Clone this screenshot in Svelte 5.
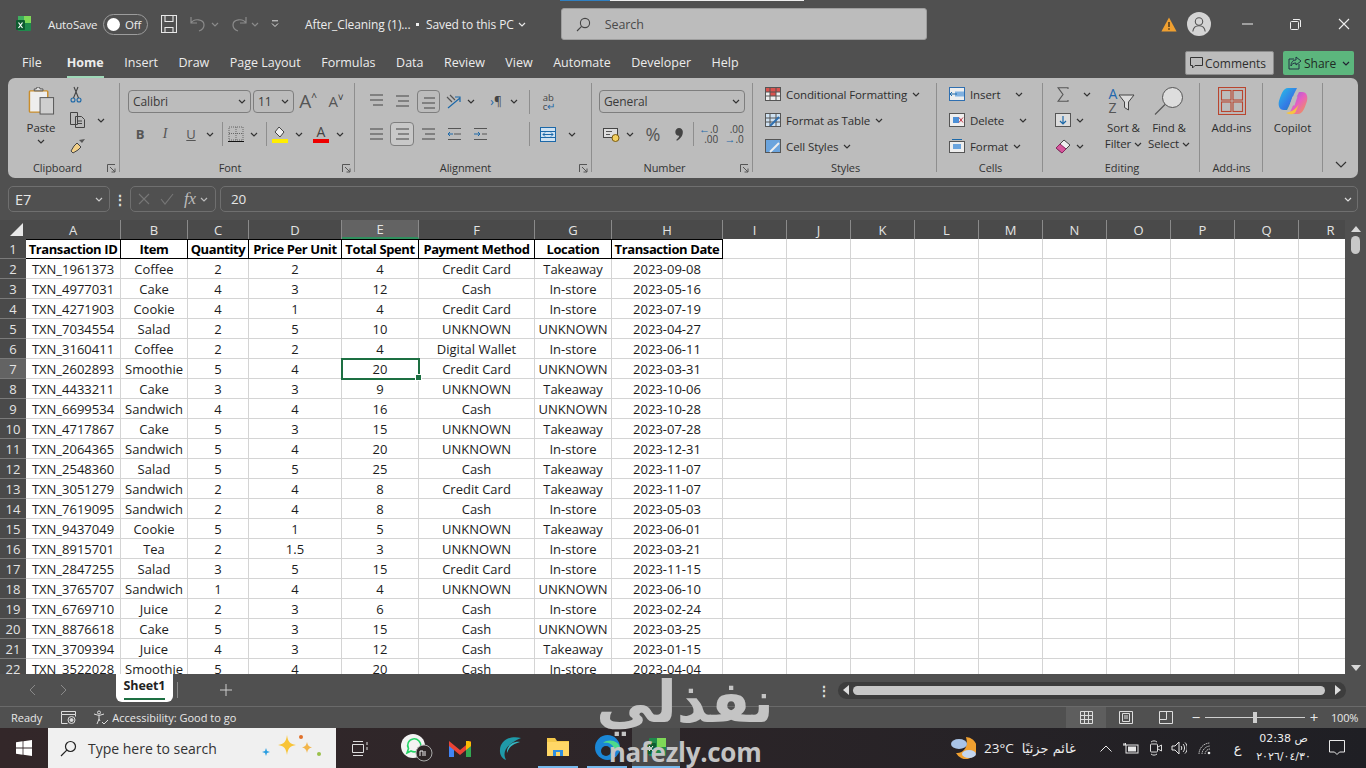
<script>
  const columns = ['A','B','C','D','E','F','G','H','I','J','K','L','M','N','O','P','Q','R'];
  const headers = ['Transaction ID','Item','Quantity','Price Per Unit','Total Spent','Payment Method','Location','Transaction Date'];
  const rows = [
    ['TXN_1961373','Coffee','2','2','4','Credit Card','Takeaway','2023-09-08'],
    ['TXN_4977031','Cake','4','3','12','Cash','In-store','2023-05-16'],
    ['TXN_4271903','Cookie','4','1','4','Credit Card','In-store','2023-07-19'],
    ['TXN_7034554','Salad','2','5','10','UNKNOWN','UNKNOWN','2023-04-27'],
    ['TXN_3160411','Coffee','2','2','4','Digital Wallet','In-store','2023-06-11'],
    ['TXN_2602893','Smoothie','5','4','20','Credit Card','UNKNOWN','2023-03-31'],
    ['TXN_4433211','Cake','3','3','9','UNKNOWN','Takeaway','2023-10-06'],
    ['TXN_6699534','Sandwich','4','4','16','Cash','UNKNOWN','2023-10-28'],
    ['TXN_4717867','Cake','5','3','15','UNKNOWN','Takeaway','2023-07-28'],
    ['TXN_2064365','Sandwich','5','4','20','UNKNOWN','In-store','2023-12-31'],
    ['TXN_2548360','Salad','5','5','25','Cash','Takeaway','2023-11-07'],
    ['TXN_3051279','Sandwich','2','4','8','Credit Card','Takeaway','2023-11-07'],
    ['TXN_7619095','Sandwich','2','4','8','Cash','In-store','2023-05-03'],
    ['TXN_9437049','Cookie','5','1','5','UNKNOWN','Takeaway','2023-06-01'],
    ['TXN_8915701','Tea','2','1.5','3','UNKNOWN','In-store','2023-03-21'],
    ['TXN_2847255','Salad','3','5','15','Credit Card','In-store','2023-11-15'],
    ['TXN_3765707','Sandwich','1','4','4','UNKNOWN','UNKNOWN','2023-06-10'],
    ['TXN_6769710','Juice','2','3','6','Cash','In-store','2023-02-24'],
    ['TXN_8876618','Cake','5','3','15','Cash','UNKNOWN','2023-03-25'],
    ['TXN_3709394','Juice','4','3','12','Cash','Takeaway','2023-01-15'],
    ['TXN_3522028','Smoothie','5','4','20','Cash','In-store','2023-04-04']
  ];
  const tabs = ['File','Home','Insert','Draw','Page Layout','Formulas','Data','Review','View','Automate','Developer','Help'];
</script>

{#snippet chev(color = '#333')}
  <svg class="chev" width="8" height="5" viewBox="0 0 8 5"><path d="M1 1l3 3 3-3" fill="none" stroke={color} stroke-width="1.2"/></svg>
{/snippet}

{#snippet lines(a, b, c, y = 3)}
  <svg width="15" height="16" viewBox="0 0 15 16" fill="none" stroke="#444" stroke-width="1.1">
    <path d="M{a} {y}H14M{b} {y + 5}H14M{c} {y + 10}H14" />
  </svg>
{/snippet}

{#snippet launcher()}
  <svg class="launch" width="9" height="9" viewBox="0 0 9 9" fill="none" stroke="#555"><path d="M.5 8V.5H8M3 3l5 5M8 4.5V8H4.5"/></svg>
{/snippet}

<div class="app">
  <div class="strip"><span class="strip-blue"></span><span class="strip-white"></span></div>

  <header class="titlebar">
    <svg class="logo" width="16" height="18" viewBox="0 0 16 18">
      <rect x="2" y="1" width="13" height="15" rx="1" fill="#1f8a4c"/>
      <rect x="8" y="1" width="7" height="7" fill="#7ed957"/>
      <rect x="2" y="1" width="6" height="7" fill="#3fae5f"/>
      <rect x="0" y="5" width="9" height="10" rx="1" fill="#0e5c30"/>
      <path d="M2.5 7.5l4 5.5M6.5 7.5l-4 5.5" stroke="#fff" stroke-width="1.2"/>
    </svg>
    <span class="autosave">AutoSave</span>
    <span class="toggle"><span class="knob"></span>Off</span>
    <svg class="save" width="16" height="18" viewBox="0 0 16 18" fill="none" stroke="#e8e8e8" stroke-width="1.1"><path d="M.5.5h15v17H.5zM4 .5v6h8v-6M4 17.5v-5h8v5"/></svg>
    <svg class="undo" width="16" height="16" viewBox="0 0 16 16" fill="none" stroke="#8b8b8b" stroke-width="1.2"><path d="M1 1v6h6M1 7c3-5 13-4 13 2 0 3-2 5-5 6"/></svg>
    <span class="q1">{@render chev('#8b8b8b')}</span>
    <svg class="redo" width="16" height="16" viewBox="0 0 16 16" fill="none" stroke="#8b8b8b" stroke-width="1.2"><path d="M15 1v6H9M15 7C12 2 2 3 2 9c0 3 2 5 5 6"/></svg>
    <span class="q2">{@render chev('#8b8b8b')}</span>
    <svg class="custom" width="8" height="8" viewBox="0 0 8 8" fill="none" stroke="#ddd"><path d="M1 .8h6M1 3.5l3 3 3-3"/></svg>
    <span class="doc first">After_Cleaning (1)...</span>
    <span class="dot"></span>
    <span class="doc">Saved to this PC</span>
    <span class="q3">{@render chev('#e8e8e8')}</span>
    <div class="search">
      <svg width="15" height="15" viewBox="0 0 15 15" fill="none" stroke="#444" stroke-width="1.1"><circle cx="9" cy="6" r="4.6"/><path d="M5.6 9.4L1 14"/></svg>
      <span>Search</span>
    </div>
    <svg class="warn" width="16" height="15" viewBox="0 0 16 15"><path d="M8 .5L15.6 14.5H.4z" fill="#f0a030"/><path d="M8 5v5M8 11.2v1.6" stroke="#40301a" stroke-width="1.4"/></svg>
    <span class="avatar">
      <svg width="14" height="15" viewBox="0 0 14 15" fill="none" stroke="#555" stroke-width="1.1"><circle cx="7" cy="4.5" r="3.7"/><path d="M.8 14.5c.5-4 3-5.8 6.2-5.8s5.700 1.800 6.200 5.800"/></svg>
    </span>
    <span class="winbtn first"><svg width="11" height="2" viewBox="0 0 11 2"><path d="M0 1h11" stroke="#eee"/></svg></span>
    <span class="winbtn"><svg width="11" height="11" viewBox="0 0 11 11" fill="none" stroke="#eee"><rect x=".5" y="2.500" width="8" height="8" rx="1"/><path d="M3 .5h6a1.500 1.500 0 0 1 1.500 1.500v6"/></svg></span>
    <span class="winbtn"><svg width="12" height="12" viewBox="0 0 12 12" stroke="#eee" stroke-width="1.100"><path d="M1 1l10 10M11 1L1 11"/></svg></span>
  </header>

  <nav class="tabsbar">
    <div class="tabs">
      {#each tabs as t}
        <span class="tab" class:active={t === 'Home'}>{t}</span>
      {/each}
    </div>
    <button class="comments">
      <svg width="13" height="12" viewBox="0 0 13 12" fill="none" stroke="#333"><path d="M.5.5h12v8H5L2.500 11V8.500h-2z"/></svg>Comments
    </button>
    <button class="share">
      <svg width="14" height="14" viewBox="0 0 14 14" fill="none" stroke="#234" stroke-width="1"><path d="M6 3H1v10h10V8M8 1l5 4-5 4V7C5 7 4 8 3 10c0-4 2-6 5-6z"/></svg>Share {@render chev('#223')}
    </button>
  </nav>

  <section class="ribbon">
    <div class="group g-clip">
      <div class="clip-body">
        <div class="paste">
          <svg width="27" height="28" viewBox="0 0 27 29">
            <rect x="1" y="4" width="19" height="22" rx="1" fill="#eee" stroke="#c98d2b" stroke-width="1.500"/>
            <path d="M6 4h9V2H12a2 2 0 0 0-4 0H6z" fill="#ddd" stroke="#555"/>
            <rect x="12" y="11" width="14" height="17" fill="#cfcfcf" stroke="#555"/>
          </svg>
          <span>Paste</span>
          {@render chev()}
        </div>
        <div class="clip-tools">
          <div class="clip-row">
            <svg width="12" height="17" viewBox="0 0 12 17" fill="none" stroke="#1c68a8" stroke-width="1.100"><circle cx="3" cy="14" r="2"/><circle cx="9" cy="14" r="2"/><path d="M3.500 12L8 1M8.500 12L4 1" stroke="#444"/></svg>
          </div>
          <div class="clip-row">
            <svg width="16" height="16" viewBox="0 0 16 16" fill="none" stroke="#444"><path d="M.5.5h7v12h-7zM5.500 4.500h6l3 3v8h-9z" fill="#bbb"/><path d="M8 9h4M8 11.500h4"/></svg>
            <span class="clip-chev">{@render chev()}</span>
          </div>
          <div class="clip-row">
            <svg width="16" height="16" viewBox="0 0 16 16"><path d="M9 2l3 3 3-4z" fill="#555"/><path d="M7 5l4 4-3 3-5 3-2-2 3-5z" fill="#f2d089" stroke="#444"/></svg>
          </div>
        </div>
      </div>
      <div class="glabel pr12"><span>Clipboard</span>{@render launcher()}</div>
    </div>

    <div class="group g-font">
      <div class="rows">
        <div class="row font1">
          <div class="select">Calibri {@render chev()}</div>
          <div class="select size">11 {@render chev()}</div>
          <span class="glyph big">A<sup>^</sup></span>
          <span class="glyph mid">A<sup>˅</sup></span>
        </div>
        <div class="row font2">
          <b class="glyph">B</b>
          <i class="glyph ital">I</i>
          <u class="glyph">U</u>
          {@render chev()}
          <span class="vsep"></span>
          <svg width="16" height="16" viewBox="0 0 16 16" fill="none" stroke="#666" stroke-dasharray="1 1"><rect x="1" y="1" width="14" height="13"/><path d="M8 1v13M1 7.500h14"/><path d="M0 15.500h16" stroke="#111" stroke-dasharray="none"/></svg>
          {@render chev()}
          <span class="vsep"></span>
          <svg width="16" height="17" viewBox="0 0 16 17"><path d="M7 1l5 5-4 5-5-5z" fill="#eee" stroke="#444"/><rect x="0" y="13" width="16" height="4" fill="#ffee00"/></svg>
          {@render chev()}
          <span class="fontcolor">A</span>
          {@render chev()}
        </div>
      </div>
      <div class="glabel"><span>Font</span>{@render launcher()}</div>
    </div>

    <div class="group g-align">
      <div class="rows">
        <div class="row align1">
          {@render lines(1, 1, 4, 1)}
          {@render lines(1, 3, 1, 2)}
          <span class="boxed">{@render lines(3, 1, 3, 4)}</span>
          <svg width="16" height="15" viewBox="0 0 16 15" fill="none" stroke="#1c68a8" stroke-width="1.200"><path d="M2 14L14 4M9 3h5v5"/><path d="M1 3l5 5M4 1l5 5" stroke="#555"/></svg>
          {@render chev()}
          <i></i>
          <span class="rtl"><em>›</em>¶</span>
          {@render chev()}
          <span class="vsep"></span>
          <span class="wrap">ab<br>c<em>↵</em></span>
        </div>
        <div class="row align2">
          {@render lines(1, 1, 1)}
          <span class="boxed on">{@render lines(1, 3, 1)}</span>
          {@render lines(1, 4, 1)}
          <svg width="15" height="14" viewBox="0 0 15 14" fill="none" stroke="#555"><path d="M1 1.500h13M7 7h7M1 12.500h13"/><path d="M6 7H1M3 5L1 7l2 2" stroke="#1c68a8"/></svg>
          <svg width="15" height="14" viewBox="0 0 15 14" fill="none" stroke="#555"><path d="M1 1.500h13M9 7h5M1 12.500h13"/><path d="M1 7h6M5 5l2 2-2 2" stroke="#1c68a8"/></svg>
          <i></i>
          <span class="vsep"></span>
          <svg width="16" height="15" viewBox="0 0 16 15" fill="#cfe2f2" stroke="#1c68a8"><rect x=".5" y=".5" width="15" height="14"/><path d="M.5 4.500h15M.5 10.500h15" /><path d="M3 7.500h10M5 5.500l-2 2 2 2M11 5.500l2 2-2 2" fill="none"/></svg>
          {@render chev()}
        </div>
      </div>
      <div class="glabel"><span>Alignment</span>{@render launcher()}</div>
    </div>

    <div class="group g-num">
      <div class="rows">
        <div class="row num1"><div class="select general">General {@render chev()}</div></div>
        <div class="row num2">
          <svg width="17" height="15" viewBox="0 0 17 15"><rect x=".5" y="1.500" width="14" height="9" fill="#ddd" stroke="#444"/><path d="M3 4.500h6M3 7.500h4" stroke="#555"/><ellipse cx="12.500" cy="11" rx="3.500" ry="3.500" fill="#f3d060" stroke="#7a5a10"/></svg>
          {@render chev()}
          <span class="pct">%</span>
          <svg width="8" height="13" viewBox="0 0 8 13"><path d="M4 0a3.800 3.800 0 0 1 3.800 4.200C7.800 8 5 11 2 12.800L1.200 12C3 10.500 4 9 4.300 7.800 2 8 .3 6.300.3 4 .3 1.700 2 0 4 0z" fill="#444"/></svg>
          <span class="vsep"></span>
          <span class="dec"><em>←</em>.0<br>.00</span>
          <span class="dec">.00<br><em>→</em>.0</span>
        </div>
      </div>
      <div class="glabel"><span>Number</span>{@render launcher()}</div>
    </div>

    <div class="group g-styles">
      <div class="stack">
        <div class="line">
          <svg width="16" height="14" viewBox="0 0 16 14"><rect x=".5" y=".5" width="15" height="13" fill="#eee" stroke="#555"/><rect x="1" y="1" width="14" height="4" fill="#d9534f"/><rect x="5" y="5" width="6" height="4" fill="#d9534f"/><path d="M.5 5h15M.5 9h15M5 .5v13M11 .5v13" stroke="#555"/></svg>
          <span>Conditional Formatting</span>{@render chev()}
        </div>
        <div class="line">
          <svg width="16" height="14" viewBox="0 0 16 14"><rect x=".5" y=".5" width="15" height="13" fill="#cfe2f2" stroke="#555"/><path d="M.5 5h15M.5 9h15M5 .5v13M11 .5v13" stroke="#555"/><path d="M5 13l9-9" stroke="#2f6fb0" stroke-width="2"/></svg>
          <span>Format as Table</span>{@render chev()}
        </div>
        <div class="line">
          <svg width="16" height="14" viewBox="0 0 16 14"><rect x=".5" y=".5" width="15" height="13" fill="#6ba4dd" stroke="#555"/><path d="M5 13l9-9" stroke="#eee" stroke-width="2"/></svg>
          <span>Cell Styles</span>{@render chev()}
        </div>
      </div>
      <div class="glabel pr10"><span>Styles</span></div>
    </div>

    <div class="group g-cells">
      <div class="stack">
        <div class="line">
          <svg width="16" height="14" viewBox="0 0 16 14"><rect x=".5" y=".5" width="15" height="13" fill="#eee" stroke="#2f6fb0"/><rect x="6" y="4.500" width="9" height="5" fill="#7fb0e0"/><path d="M1 7h7M3 5L1 7l2 2" stroke="#1c68a8" fill="none"/></svg>
          <span class="cell-name">Insert</span>{@render chev()}
        </div>
        <div class="line">
          <svg width="16" height="14" viewBox="0 0 16 14"><rect x=".5" y=".5" width="15" height="13" fill="#eee" stroke="#555"/><rect x="4" y="4" width="6" height="6" fill="#4b8fd6"/><path d="M10 4.500l4 5M14 4.500l-4 5" stroke="#c23a4a"/></svg>
          <span class="cell-name del">Delete</span>{@render chev()}
        </div>
        <div class="line">
          <svg width="16" height="14" viewBox="0 0 16 14"><rect x=".5" y="2.500" width="15" height="11" fill="#eee" stroke="#555"/><rect x="4" y="5" width="8" height="5" fill="#6ba4dd"/><path d="M3 .5h10" stroke="#1c68a8"/></svg>
          <span>Format</span>{@render chev()}
        </div>
      </div>
      <div class="glabel pr10"><span>Cells</span></div>
    </div>

    <div class="group g-edit">
      <div class="edit-body">
        <div class="edit-tools">
          <div class="edit-row">
            <svg class="sigma" width="12" height="15" viewBox="0 0 12 15" fill="none" stroke="#555" stroke-width="1.100"><path d="M11 2V.7H1l5 6.800-5 6.800h10V13"/></svg>
            <span class="chev-far">{@render chev()}</span>
          </div>
          <div class="edit-row">
            <svg width="16" height="14" viewBox="0 0 16 14"><rect x=".5" y=".5" width="15" height="13" fill="#ddd" stroke="#555"/><path d="M8 3v8M5 8l3 3 3-3" stroke="#1c68a8" fill="none" stroke-width="1.200"/></svg>
            {@render chev()}
          </div>
          <div class="edit-row">
            <svg width="16" height="15" viewBox="0 0 16 15"><path d="M1 9l8-8 6 5-8 8z" fill="#eee" stroke="#444"/><path d="M1 9l4-4 6 5-4 4z" fill="#d6569b" stroke="#8a2560"/></svg>
            {@render chev()}
          </div>
        </div>
        <div class="bigtool sort">
          <div class="sorticon">
            <span class="az"><em>A</em><br>Z</span>
            <svg width="17" height="18" viewBox="0 0 17 18" fill="none"><path d="M1 2h15l-5.500 7v8l-4-2.500V9z" fill="#ddd" stroke="#444"/></svg>
          </div>
          <span>Sort &amp;</span><span class="more">Filter {@render chev()}</span>
        </div>
        <div class="bigtool find">
          <svg width="30" height="28" viewBox="0 0 30 28" fill="none"><circle cx="18.500" cy="10.500" r="10" fill="#ddd" stroke="#555"/><path d="M11 17.500L1 27.500" stroke="#555" stroke-width="1.100"/></svg>
          <span>Find &amp;</span><span class="more">Select {@render chev()}</span>
        </div>
      </div>
      <div class="glabel pr10"><span>Editing</span></div>
    </div>

    <div class="group g-add">
      <div class="bigtool">
        <svg width="28" height="28" viewBox="0 0 28 28" fill="none" stroke="#b9452f" stroke-width="1.100"><rect x=".5" y=".5" width="27" height="27"/><rect x="3.500" y="3.500" width="9.500" height="9.500"/><rect x="15" y="3.500" width="9.500" height="9.500"/><rect x="3.500" y="15" width="9.500" height="9.500"/><rect x="15" y="15" width="9.500" height="9.500"/></svg>
        <span>Add-ins</span>
      </div>
      <div class="glabel pr0"><span>Add-ins</span></div>
    </div>

    <div class="group g-cop">
      <div class="bigtool">
        <svg width="30" height="28" viewBox="0 0 30 28">
          <defs>
            <linearGradient id="cp1" x1="0" y1="0" x2="1" y2="1"><stop offset="0" stop-color="#25c3e8"/><stop offset=".6" stop-color="#3478e5"/><stop offset="1" stop-color="#1a9a70"/></linearGradient>
            <linearGradient id="cp2" x1="0" y1="0" x2="1" y2="1"><stop offset="0" stop-color="#8a5ce8"/><stop offset=".5" stop-color="#e760c0"/><stop offset="1" stop-color="#f0a040"/></linearGradient>
          </defs>
          <path d="M10 1h9l-3 6-4 10-3 6H6C1 23 0 18 1 14 3 8 5 1 10 1z" fill="url(#cp1)"/>
          <path d="M20 27h-9l3-6 4-10 3-6h3c5 0 6 5 5 9-2 6-4 13-9 13z" fill="url(#cp2)"/>
          <path d="M8 26c4 2 9 2 10-2l3-7c-3 6-9 8-13 9z" fill="#f5c542"/>
          <path d="M14.500 9.500h5l-3 9h-5z" fill="#bcbcbc"/>
        </svg>
        <span>Copilot</span>
      </div>
    </div>

    <div class="collapse"><svg width="12" height="7" viewBox="0 0 12 7"><path d="M1 1l5 5 5-5" fill="none" stroke="#333" stroke-width="1.200"/></svg></div>
  </section>

  <section class="fx">
    <div class="namebox"><span>E7</span>{@render chev('#ccc')}</div>
    <span class="kebab">⋮</span>
    <div class="fxbtns">
      <svg width="12" height="12" viewBox="0 0 12 12" stroke="#777" stroke-width="1.100"><path d="M1 1l10 10M11 1L1 11"/></svg>
      <svg width="14" height="12" viewBox="0 0 14 12" fill="none" stroke="#777" stroke-width="1.100"><path d="M1 6l4 5 8-10"/></svg>
      <span class="fxlabel">fx</span>
      {@render chev('#bbb')}
    </div>
    <div class="fxinput"><span>20</span>{@render chev('#ddd')}</div>
  </section>

  <section class="sheet">
    <div class="grid">
      <div class="hd corner"><span class="tri"></span></div>
      {#each columns as c}
        <div class="hd col" class:sel={c === 'E'}>{c}</div>
      {/each}

      <div class="hd rownum">1</div>
      {#each headers as h}
        <div class="c head">{h}</div>
      {/each}
      {#each columns.slice(8) as _}<div class="c"></div>{/each}

      {#each rows as row, i}
        <div class="hd rownum" class:sel={i === 5}>{i + 2}</div>
        {#each row as v, j}
          <div class="c" class:picked={i === 5 && j === 4}>{v}{#if i === 5 && j === 4}<span class="handle"></span>{/if}</div>
        {/each}
        {#each columns.slice(8) as _}<div class="c"></div>{/each}
      {/each}
    </div>

    <div class="vscroll">
      <span class="tup"></span>
      <span class="vthumb"></span>
      <span class="grow"></span>
      <span class="tdown"></span>
    </div>
  </section>

  <section class="sheetbar">
    <svg class="nav" width="8" height="12" viewBox="0 0 8 12" fill="none" stroke="#8a8a8a"><path d="M7 1L2 6l5 5"/></svg>
    <svg class="nav next" width="8" height="12" viewBox="0 0 8 12" fill="none" stroke="#8a8a8a"><path d="M1 1l5 5-5 5"/></svg>
    <div class="sheettab"><span>Sheet1</span></div>
    <span class="tabsep"></span>
    <svg class="plus" width="12" height="12" viewBox="0 0 12 12" stroke="#ccc"><path d="M6 0v12M0 6h12"/></svg>
    <span class="kebab sk">⋮</span>
    <div class="hscroll">
      <span class="tleft"></span>
      <span class="hthumb"></span>
      <span class="tright"></span>
    </div>
  </section>

  <footer class="status">
    <span>Ready</span>
    <svg class="macro" width="15" height="13" viewBox="0 0 15 13" fill="none" stroke="#ddd"><path d="M.5.5h14v3H.5zM.5 3.500v9h6M14.500 3.500v2"/><circle cx="10.500" cy="9" r="3.500"/><circle cx="10.500" cy="9" r="1.500" fill="#ddd"/></svg>
    <svg class="access" width="15" height="15" viewBox="0 0 15 15" fill="none" stroke="#ddd"><circle cx="6" cy="2.500" r="1.500"/><path d="M1 4l5 1.500L11 4M6 6v3l-2 5M6 9l1 2M9 12l2 2 4-4"/></svg>
    <span>Accessibility: Good to go</span>
    <div class="views">
      <span class="view on"><svg width="13" height="13" viewBox="0 0 13 13" fill="none" stroke="#ddd"><path d="M.5.500h12v12H.5zM4.500.500v12M8.500.500v12M.5 4.500h12M.5 8.500h12"/></svg></span>
      <span class="view"><svg width="14" height="13" viewBox="0 0 14 13" fill="none" stroke="#ddd"><path d="M.5.500h13v12H.5zM3.500 2.500h7v8h-7zM5 5h4M5 7h4"/></svg></span>
      <span class="view"><svg width="14" height="13" viewBox="0 0 14 13" fill="none" stroke="#ddd"><path d="M.5.500h13v12H.5zM.5 8.500h7v-8"/></svg></span>
    </div>
    <div class="zoomctl">
      <span class="zbtn">−</span>
      <span class="ztrack"><span class="zthumb"></span></span>
      <span class="zbtn">+</span>
      <span class="zpct">100%</span>
    </div>
  </footer>

  <div class="taskbar">
    <svg class="start" width="16" height="16" viewBox="0 0 16 16" fill="#fff"><path d="M0 2.200l6.600-.9v6.300H0zM7.400 1.200L16 0v7.600H7.400zM0 8.400h6.600v6.300L0 13.800zM7.400 8.400H16V16l-8.600-1.200z"/></svg>
    <div class="tsearch">
      <svg width="17" height="17" viewBox="0 0 17 17" fill="none" stroke="#222" stroke-width="1.200"><circle cx="10.500" cy="6.500" r="5"/><path d="M6.800 10.200L1 16"/></svg>
      <span>Type here to search</span>
      <svg class="spark" width="62" height="30" viewBox="0 0 62 30">
        <path d="M26 2c1 7 3 9 9 10-6 1-8 3-9 10-1-7-3-9-9-10 6-1 8-3 9-10z" fill="#f8c437"/>
        <path d="M46 9c.5 3 2 5 5 5.500-3 .5-4.500 2-5 5.500-.5-3.500-2-5-5-5.500 3-.5 4.500-2.500 5-5.500z" fill="#f2b54a"/>
        <path d="M5 15l1 3 3 1-3 1-1 3-1-3-3-1 3-1z" fill="#2a9de0"/>
        <circle cx="40" cy="4" r="2" fill="#e0702a"/><circle cx="58" cy="21" r="2" fill="#9ac04a"/>
      </svg>
    </div>
    <svg class="taskview" width="16" height="15" viewBox="0 0 16 15" fill="none" stroke="#ddd"><path d="M1 .5h10M1 14.500h10M.5 3.500h11v8H.5zM15 1v3M15 6v3"/></svg>
    <span class="tb wa">
      <svg width="34" height="30" viewBox="0 0 34 30">
        <circle cx="13" cy="13" r="12" fill="#f3f3f3"/>
        <path d="M7 20l1.500-4.500A6.500 6.500 0 1 1 11 18z" fill="none" stroke="#25d366" stroke-width="1.600"/>
        <circle cx="24" cy="20" r="8" fill="#2c2526" stroke="#aaa"/>
        <path d="M20 23v-5h3v5M25 18v5" fill="none" stroke="#eee"/>
      </svg>
    </span>
    <span class="tb gm">
      <svg width="22" height="17" viewBox="0 0 22 17">
        <path d="M0 3v14h5V7z" fill="#4285f4"/><path d="M17 7v10h5V3z" fill="#34a853"/>
        <path d="M0 1l11 9 11-9v5l-11 9L0 6z" fill="#ea4335"/><path d="M17 1h3l2 1v4l-5 4z" fill="#fbbc04"/>
      </svg>
    </span>
    <span class="tb sw">
      <svg width="25" height="25" viewBox="0 0 25 25" fill="none">
        <path d="M24 2C14-1 2 4 3 16c.3 4 3 7 6 8-3-6-3-14 15-22z" fill="#1f9aa8"/>
        <path d="M23 6C16 5 9 10 10 17c2-6 6-9 13-11z" fill="#36b9c4"/>
      </svg>
    </span>
    <span class="tb fold act">
      <svg width="22" height="20" viewBox="0 0 22 20"><path d="M0 1h8l2 3h12v15H0z" fill="#f4c84a"/><path d="M0 5h22v14H0z" fill="#ffd766"/><rect x="6" y="13" width="10" height="6" fill="#2f8fe0"/><rect x="9" y="15" width="4" height="4" fill="#ffd766"/></svg>
    </span>
    <span class="tb edge act">
      <svg width="25" height="25" viewBox="0 0 25 25"><circle cx="12.500" cy="12.500" r="12.500" fill="#1b87d6"/><path d="M25 13C24 6 14 3 8 8c4-1 10 0 11 6 4 2 6 1 6-1z" fill="#4dd98a"/><circle cx="11" cy="16" r="5" fill="#2c2526"/></svg>
    </span>
    <span class="tb xl act">
      <svg width="20" height="20" viewBox="0 0 20 20"><rect x="3" y="1" width="17" height="18" rx="1" fill="#1f8a4c"/><rect x="11" y="1" width="9" height="9" fill="#7ed957"/><rect x="0" y="6" width="10" height="11" rx="1" fill="#0e5c30"/><path d="M3 9l4 5M7 9l-4 5" stroke="#fff"/></svg>
    </span>

    <div class="tray">
      <svg class="weather" width="25" height="24" viewBox="0 0 25 24"><path d="M15 1a11 11 0 1 1-10 16c7 1 13-6 10-16z" fill="#f0a030"/><ellipse cx="8" cy="8" rx="8" ry="5" fill="#a9c4e8"/><ellipse cx="18" cy="18" rx="7" ry="4" fill="#c3d6ef"/></svg>
      <span class="temp">23°C</span>
      <span class="cond" dir="rtl">غائم جزئيًا</span>
      <svg class="up" width="12" height="7" viewBox="0 0 12 7" fill="none" stroke="#e8e8e8"><path d="M.5 6.500L6 1l5.500 5.500"/></svg>
      <svg width="16" height="11" viewBox="0 0 16 11" fill="#e8e8e8"><rect x="3" y="2" width="12" height="8" fill="none" stroke="#e8e8e8"/><rect x="5" y="3.500" width="8" height="5"/><path d="M0 2h3M1 0v2M2.500 0v2" stroke="#e8e8e8"/></svg>
      <svg width="12" height="16" viewBox="0 0 12 16" fill="none" stroke="#ddd"><rect x=".5" y="4" width="7" height="8" rx="1"/><path d="M8 7l3.500-2v6L8 9M1 2c2-1.500 4-1.500 6 0M1 14c2 1.500 4 1.500 6 0"/></svg>
      <svg class="speaker" width="16" height="14" viewBox="0 0 16 14" fill="none" stroke="#e8e8e8"><path d="M1 5h3l4-4v12l-4-4H1zM10 5c1 1 1 3 0 4M12 3c2 2 2 6 0 8M14 1.500c3 3 3 8 0 11"/></svg>
      <svg class="wifi" width="13" height="13" viewBox="0 0 13 13" fill="none" stroke="#bbb"><path d="M1 12C1 6 6 1 12 1M4 12c0-4 4-8 8-8M7 12c0-2 2-5 5-5" stroke-dasharray="1.500 .6"/><circle cx="11" cy="11" r="1.300" fill="#eee" stroke="none"/></svg>
      <span class="lang">ع</span>
      <div class="clock"><span dir="rtl">ص 02:38</span><span>٢٠٢٦/٠٤/٣٠</span></div>
      <svg class="notif" width="16" height="16" viewBox="0 0 16 16" fill="none" stroke="#e8e8e8"><path d="M.5.5h15v11.500h-5L8 14.500 5.500 12h-5z"/></svg>
    </div>
  </div>

  <div class="watermark">
    <span class="wm-ar">نفذلي</span>
    <span class="wm-en">nafezly.com</span>
  </div>
</div>

<style>
  :global(body) { margin: 0; background: #505050; overflow: hidden; }
  .app {
    position: relative; width: 1366px; height: 768px; overflow: hidden;
    display: flex; flex-direction: column;
    background: #505050;
    font-family: "Open Sans", "Noto Sans", sans-serif; font-size: 11.5px; letter-spacing: -0.1px; color: #2e2e2e;
  }
  svg { display: block; flex: none; }
  .strip { position: absolute; top: 0; left: 560px; display: flex; height: 1px; }
  .strip-blue { width: 50px; background: #2f7fc0; }
  .strip-white { width: 194px; background: #eee; }

  /* title bar */
  .titlebar { height: 44px; flex: none; display: flex; align-items: center; color: #ececec; padding-left: 16px; padding-top: 4px; box-sizing: border-box; }
  .titlebar > * { flex: none; }
  .logo { margin-right: 16px; }
  .autosave { width: 55px; }
  .toggle { width: 45px; height: 21px; box-sizing: border-box; border: 1px solid #9c9c9c; border-radius: 11px; display: flex; align-items: center; gap: 5px; padding-left: 3px; font-size: 11.5px; }
  .knob { width: 13px; height: 13px; border-radius: 50%; background: #fff; }
  .save { margin-left: 13px; }
  .undo { margin-left: 13px; }
  .q1 { margin-left: 5px; }
  .redo { margin-left: 12px; }
  .q2 { margin-left: 4px; }
  .custom { margin-left: 12px; }
  .doc { font-size: 12px; white-space: nowrap; }
  .doc.first { margin-left: 26px; width: 107px; }
  .dot { width: 3px; height: 3px; background: #eee; margin: 0 7px 0 4px; }
  .q3 { margin-left: 4px; }
  .search { margin-left: 35px; width: 366px; height: 32px; box-sizing: border-box; background: #bcbcbc; border: 1px solid #9e9e9e; border-radius: 3px; display: flex; align-items: center; gap: 14px; padding-left: 14px; color: #4a4a4a; font-size: 12.5px; }
  .warn { margin-left: 234px; }
  .avatar { margin-left: 10px; width: 24px; height: 24px; border-radius: 50%; background: #d4d4d4; display: grid; place-items: center; }
  .winbtn { width: 48px; display: grid; place-items: center; }
  .winbtn.first { margin-left: 13px; }

  /* tabs */
  .tabsbar { height: 34px; flex: none; display: flex; align-items: flex-start; color: #ececec; box-sizing: border-box; padding-top: 7px; }
  .tabs { display: flex; gap: 20.5px; padding-left: 22px; width: 1185px; box-sizing: border-box; flex: none; }
  .tab { height: 27px; line-height: 24px; font-size: 12.5px; box-sizing: border-box; white-space: nowrap; letter-spacing: 0; }
  .tab:first-child { margin-right: 4.5px; }
  .tab.active { font-weight: 700; border-bottom: 2px solid #9fd8b8; height: 27px; }
  button { font: inherit; box-sizing: border-box; height: 24px; display: flex; align-items: center; border-radius: 2px; padding: 0; flex: none; }
  .comments { width: 89px; background: #bcbcbc; border: 1px solid #8c8c8c; gap: 2px; padding-left: 4px; color: #2e2e2e; font-size: 12px; }
  .share { width: 71px; margin-left: 9px; background: #5cb67d; border: none; gap: 2px; padding-left: 5px; color: #1f2a24; font-size: 12px; }
  .share .chev { margin-left: 4px; }

  /* ribbon */
  .ribbon { height: 100px; flex: none; margin: 0 8px; background: #bcbcbc; border-radius: 7px; display: flex; padding-top: 5px; box-sizing: border-box; }
  .group { height: 89px; display: flex; flex-direction: column; justify-content: space-between; border-right: 1px solid #8e8e8e; box-sizing: border-box; flex: none; }
  .g-clip { width: 112px; }
  .g-font { width: 235px; padding-left: 8px; }
  .g-align { width: 237px; padding-left: 7px; }
  .g-num { width: 161px; padding-left: 7px; }
  .g-styles { width: 184px; padding-left: 12px; }
  .g-cells { width: 106px; padding-left: 12px; }
  .g-edit { width: 157px; padding-left: 12px; }
  .g-add { width: 63px; padding-left: 1px; }
  .g-cop { width: 60px; }
  .collapse { flex: 1; display: flex; align-items: flex-end; justify-content: center; padding-bottom: 10px; }

  .glabel { height: 14px; line-height: 14px; margin-bottom: -3px; font-size: 11px; display: flex; align-items: center; justify-content: center; position: relative; text-align: center; color: #333; padding-right: 22px; }
  .pr12 { padding-right: 12px; }
  .pr10 { padding-right: 10px; }
  .pr0 { padding-right: 0; }
  .launch { position: absolute; right: 3px; top: 3px; }

  .rows { padding-top: 7px; display: flex; flex-direction: column; gap: 9px; }
  .row { display: grid; align-items: center; justify-items: center; height: 23px; grid-template-rows: 23px; }
  .font1 { grid-template-columns: 123px 43px 28px 28px; }
  .font1 .size { margin-left: 2px; width: 41px; }
  .font2 { grid-template-columns: 24px 26px 26px 12px 12px 16px 20px 4px 24px 14px 30px 8px; height: 24px; grid-template-rows: 24px; }
  .align1 { grid-template-columns: 28px 24px 28px 24px 10px 6px 28px 8px 22px 18px; }
  .align2 { grid-template-columns: 28px 24px 28px 24px 28px 28px 14px 24px 24px; height: 24px; grid-template-rows: 24px; }
  .num1 { grid-template-columns: 146px; }
  .num2 { grid-template-columns: 22px 16px 30px 22px 6px 25px 26px; height: 24px; grid-template-rows: 24px; padding-left: 1px; }

  .select { width: 100%; height: 23px; box-sizing: border-box; border: 1px solid #7e7e7e; border-radius: 4px; display: flex; align-items: center; justify-content: space-between; padding: 0 4px; font-size: 12px; color: #3a3a3a; }
  .glyph { font-size: 16px; line-height: 1; color: #555; font-family: "Liberation Serif", serif; font-weight: 400; }
  .glyph sup { font-size: 10px; line-height: 0; color: #333; }
  .big { font-size: 19px; font-family: "Open Sans", sans-serif; }
  .mid { font-size: 15px; font-family: "Open Sans", sans-serif; }
  b.glyph, u.glyph { font-family: "Open Sans", sans-serif; font-size: 13px; }
  b.glyph { font-weight: 700; }
  .ital { font-size: 14px; }
  .fontcolor { width: 16px; height: 18px; box-sizing: border-box; border-bottom: 4px solid #ee0000; font-size: 14px; line-height: 14px; text-align: center; color: #444; }
  .vsep { width: 1px; height: 24px; background: #8e8e8e; }
  .boxed { width: 23px; height: 23px; box-sizing: border-box; border: 1px solid #7e7e7e; border-radius: 4px; display: grid; place-items: center; }
  .boxed.on { background: #c8c8c8; height: 24px; width: 24px; }
  .rtl { font-size: 12px; color: #444; }
  .rtl em, .wrap em, .dec em { font-style: normal; color: #1c68a8; }
  .wrap { font-size: 9.5px; line-height: 9px; color: #444; }
  .pct { font-size: 18px; line-height: 1; color: #555; }
  .dec { font-size: 10px; line-height: 10px; color: #444; text-align: right; white-space: nowrap; }
  .dec em { font-size: 11px; font-weight: 700; }

  .stack { display: flex; flex-direction: column; margin-top: -2px; }
  .line { height: 26px; display: flex; align-items: center; gap: 5px; white-space: nowrap; }
  .cell-name { width: 40px; }
  .cell-name.del { width: 44px; }

  .clip-body { display: flex; padding-left: 15px; }
  .paste { width: 36px; display: flex; flex-direction: column; align-items: center; padding-top: 4px; }
  .paste span { line-height: 16px; margin-top: 5px; }
  .paste .chev { margin-top: 3px; }
  .clip-tools { margin-left: 10px; margin-top: -2px; display: flex; flex-direction: column; }
  .clip-row { height: 26px; display: flex; align-items: center; justify-content: flex-start; padding-left: 1px; }
  .clip-chev { margin-left: 11px; }

  .edit-body { display: flex; }
  .edit-tools { width: 47px; margin-top: -2px; }
  .edit-row { height: 26px; display: flex; align-items: center; gap: 5px; }
  .sigma { margin-left: 2px; }
  .chev-far { margin-left: 9px; }
  .bigtool { display: flex; flex-direction: column; align-items: center; line-height: 16px; padding-top: 4px; white-space: nowrap; }
  .bigtool > svg, .sorticon { margin-bottom: 5px; }
  .sorticon { height: 28px; width: 30px; display: flex; align-items: flex-start; gap: 1px; }
  .sorticon svg { margin-top: 6px; }
  .az { font-size: 14px; line-height: 14px; color: #555; }
  .az em { font-style: normal; color: #2167ae; }
  .more { display: flex; align-items: center; gap: 3px; }
  .sort { width: 43px; }
  .find { width: 48px; }

  /* formula bar */
  .fx { height: 26px; flex: none; margin-top: 8px; padding: 0 8px; display: flex; align-items: center; color: #e6e6e6; }
  .namebox { width: 102px; height: 26px; box-sizing: border-box; border: 1px solid #6f6f6f; border-radius: 5px; display: flex; align-items: center; justify-content: space-between; padding: 0 6px; font-size: 14.5px; }
  .kebab { width: 20px; text-align: center; font-size: 14px; font-weight: 700; color: #ddd; }
  .fxbtns { width: 86px; height: 26px; box-sizing: border-box; border: 1px solid #6f6f6f; border-radius: 5px; display: flex; align-items: center; gap: 10px; padding-left: 7px; }
  .fxlabel { font: italic 17px "Liberation Serif", serif; color: #bbb; margin-right: -6px; }
  .fxinput { width: 1138px; margin-left: 4px; height: 26px; box-sizing: border-box; border: 1px solid #6f6f6f; border-radius: 5px; display: flex; align-items: center; justify-content: space-between; padding: 0 5px 0 10px; font-size: 13.5px; }

  /* sheet */
  .sheet { height: 454px; flex: none; margin-top: 8px; display: flex; overflow: hidden; }
  .grid { flex: 1; min-width: 0; overflow: hidden; display: grid; grid-template-columns: 26px 95px 67px 61px 93px 77px 116px 77px 111px repeat(10, 64px); grid-auto-rows: 20px; grid-template-rows: 19px; font-size: 13px; letter-spacing: 0; color: #1c1c1c; background: #fff; }
  .hd { background: #4a4a4a; color: #e4e4e4; display: flex; align-items: center; justify-content: center; box-sizing: border-box; font-size: 13px; }
  .col { border-right: 1px solid #8a8a8a; }
  .col.sel { background: #636363; border-bottom: 2px solid #2f8f5e; }
  .rownum { border-bottom: 1px solid #7a7a7a; }
  .rownum.sel { background: #636363; }
  .corner { justify-content: flex-end; align-items: flex-end; padding: 0 3px 3px 0; }
  .tri { width: 0; height: 0; border-left: 13px solid transparent; border-bottom: 13px solid #e8e8e8; }
  .c { box-sizing: border-box; border-right: 1px solid #d4d4d4; border-bottom: 1px solid #d4d4d4; display: flex; align-items: center; justify-content: center; white-space: nowrap; position: relative; line-height: 19px; padding-top: 1px; }
  .head { font-weight: 700; letter-spacing: -0.4px; border: 1px solid #000; border-left: none; color: #000; padding-top: 0; }
  .picked { outline: 2px solid #1d6f42; outline-offset: -1px; z-index: 2; }
  .handle { position: absolute; right: -4px; bottom: -3px; width: 5px; height: 5px; background: #1d6f42; border: 1px solid #fff; }

  .vscroll { width: 21px; flex: none; display: flex; flex-direction: column; align-items: center; background: #505050; }
  .tup { margin-top: 6px; border: 5px solid transparent; border-top: none; border-bottom: 6px solid #d8d8d8; width: 0; }
  .vthumb { margin-top: 4px; width: 9px; height: 18px; border-radius: 5px; background: #c8c8c8; }
  .grow { flex: 1; }
  .tdown { margin-bottom: 3px; border: 5px solid transparent; border-bottom: none; border-top: 6px solid #d8d8d8; width: 0; }

  /* sheet tabs */
  .sheetbar { height: 32px; flex: none; display: flex; align-items: center; }
  .nav { margin-left: 28px; }
  .nav.next { margin-left: 24px; }
  .sheettab { margin-left: 48px; width: 57px; height: 28px; background: #fff; border-radius: 0 0 6px 6px; align-self: flex-start; display: flex; justify-content: center; flex: none; }
  .sheettab span { height: 24px; line-height: 23px; font-weight: 700; font-size: 12.5px; color: #222; border-bottom: 2px solid #1d6f42; }
  .tabsep { width: 1px; height: 16px; background: #8a8a8a; margin-left: 4px; flex: none; }
  .plus { margin-left: 42px; }
  .sk { margin-left: 585px; width: 10px; color: #ddd; flex: none; }
  .hscroll { margin-left: 11px; width: 508px; height: 17px; border-radius: 9px; background: #3d3d3d; display: flex; align-items: center; padding: 0 5px; box-sizing: border-box; flex: none; }
  .tleft { border: 5px solid transparent; border-left: none; border-right: 6px solid #ddd; }
  .hthumb { flex: 1; height: 9px; border-radius: 5px; background: #c8c8c8; margin: 0 10px 0 4px; }
  .tright { border: 5px solid transparent; border-right: none; border-left: 6px solid #ddd; }

  /* status */
  .status { height: 22px; flex: none; border-top: 1px solid #6a6a6a; box-sizing: border-box; display: flex; align-items: center; padding: 0 8px 0 11px; color: #e8e8e8; font-size: 11px; letter-spacing: 0; }
  .macro { margin-left: 19px; }
  .access { margin-left: 17px; margin-right: 4px; }
  .views { margin-left: auto; display: flex; height: 100%; }
  .view { width: 40px; display: grid; place-items: center; }
  .view.on { background: #5e5e5e; }
  .zoomctl { margin-left: 5px; display: flex; align-items: center; gap: 4px; }
  .zbtn { width: 10px; text-align: center; font-size: 15px; line-height: 1; }
  .ztrack { width: 100px; height: 1px; background: #cfcfcf; display: flex; justify-content: center; align-items: center; }
  .zthumb { width: 4px; height: 11px; background: #cfcfcf; flex: none; }
  .zpct { margin-left: 8px; width: 27px; font-size: 11px; letter-spacing: -0.2px; white-space: nowrap; }

  /* taskbar */
  .taskbar { height: 40px; flex: none; background: linear-gradient(90deg, #332729 0%, #2e2629 40%, #1f1f24 100%); display: flex; align-items: center; color: #eee; }
  .taskbar > * { flex: none; }
  .start { margin-left: 16px; }
  .tsearch { margin-left: 16px; width: 288px; height: 40px; box-sizing: border-box; background: #f0f0f0; display: flex; align-items: center; padding: 0 13px 0 12px; gap: 11px; color: #333; font-size: 14px; letter-spacing: 0; white-space: nowrap; }
  .spark { margin-left: auto; }
  .taskview { margin-left: 16px; }
  .tb { height: 40px; display: flex; align-items: center; justify-content: center; box-sizing: border-box; }
  .wa { margin-left: 31px; width: 36px; }
  .gm { margin-left: 13px; width: 24px; }
  .sw { margin-left: 25px; width: 25px; }
  .fold { margin-left: 16px; width: 40px; }
  .edge { margin-left: 9px; width: 40px; }
  .xl { margin-left: 5px; width: 48px; background: #4a4a4a; }
  .act { border-bottom: 2px solid #76b9ed; }
  .tray { margin-left: 271px; display: flex; align-items: center; color: #eee; gap: 11px; }
  .temp { font-size: 13.5px; margin-left: -3px; letter-spacing: 0; }
  .cond { font-family: "DejaVu Sans", sans-serif; font-size: 13px; width: 54px; white-space: nowrap; margin: 0 13px 0 -3px; letter-spacing: 0; }
  .speaker { margin-left: -2px; }
  .lang { font-family: "DejaVu Sans", sans-serif; font-size: 13px; margin-left: 12px; }
  .clock { margin-left: 0; width: 62px; display: flex; flex-direction: column; align-items: center; font-family: "DejaVu Sans", sans-serif; font-size: 11px; line-height: 18px; white-space: nowrap; letter-spacing: 0; }
  .notif { margin-left: 3px; }

  /* watermark sits over the bars */
  .watermark { position: absolute; left: 590px; top: 668px; width: 190px; height: 100px; display: flex; flex-direction: column; align-items: center; pointer-events: none; color: #c4c4c4; z-index: 5; font-weight: 700; letter-spacing: 0; }
  .wm-ar { font-family: "DejaVu Sans", sans-serif; font-size: 58px; line-height: 68px; }
  .wm-en { font-family: "Open Sans", sans-serif; font-size: 26px; line-height: 32px; letter-spacing: -0.3px; }
</style>
